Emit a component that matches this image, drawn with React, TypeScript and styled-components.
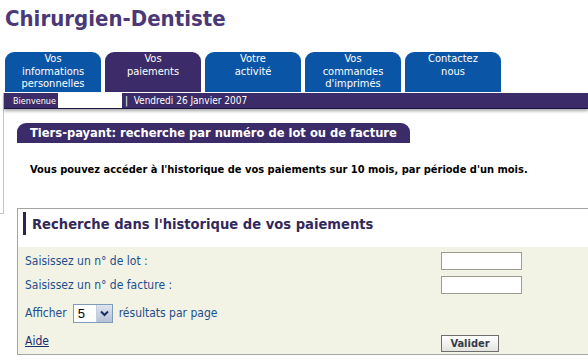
import React from "react";
import styled, { createGlobalStyle } from "styled-components";

const PURPLE = "#3b2b68";
const BLUE = "#0b55a7";

const tabs = [
  { label: "Vos informations personnelles", lines: ["Vos", "informations", "personnelles"] },
  { label: "Vos paiements", lines: ["Vos", "paiements"], active: true },
  { label: "Votre activité", lines: ["Votre", "activité"] },
  { label: "Vos commandes d'imprimés", lines: ["Vos", "commandes", "d'imprimés"] },
  { label: "Contactez nous", lines: ["Contactez", "nous"] },
];

const App: React.FC = () => {
  return (
    <Page>
      <GlobalStyle />
      <Title>Chirurgien-Dentiste</Title>
      <TabBar>
        {tabs.map((t) => (
          <Tab key={t.label} $active={!!t.active}>
            {t.lines.map((l) => (
              <span key={l}>{l}</span>
            ))}
          </Tab>
        ))}
      </TabBar>
      <Body>
        <Rail />
        <Main>
          <InfoBar>
            <Welcome>Bienvenue</Welcome>
            <UserSlot />
            <DateText>|&nbsp; Vendredi 26 Janvier 2007</DateText>
          </InfoBar>
          <SectionHeader>Tiers-payant: recherche par numéro de lot ou de facture</SectionHeader>
          <Intro>Vous pouvez accéder à l'historique de vos paiements sur 10 mois, par période d'un mois.</Intro>
          <SearchBox>
            <BoxTitle>Recherche dans l'historique de vos paiements</BoxTitle>
            <Form>
              <Label>Saisissez un n° de lot :</Label>
              <TextInput type="text" />
              <Label>Saisissez un n° de facture :</Label>
              <TextInput type="text" />
              <Label $wide>
                Afficher
                <Select>
                  <SelectValue>5</SelectValue>
                  <SelectButton>
                    <svg width="9" height="7" viewBox="0 0 9 7">
                      <path d="M1 1.5 L4.5 5 L8 1.5" fill="none" stroke="#1c2f5c" strokeWidth="2" />
                    </svg>
                  </SelectButton>
                </Select>
                résultats par page
              </Label>
              <HelpLink href="#">Aide</HelpLink>
              <Button>Valider</Button>
            </Form>
          </SearchBox>
        </Main>
      </Body>
    </Page>
  );
};
export default App;

const GlobalStyle = createGlobalStyle`
  html, body {
    margin: 0;
    padding: 0;
    background: #fff;
    font-family: "DejaVu Sans Condensed", "DejaVu Sans", Tahoma, sans-serif;
  }
`;

const Page = styled.div`
  width: 588px;
  height: 361px;
  overflow: hidden;
`;

const Title = styled.h1`
  margin: 0;
  padding: 6px 0 0 5px;
  height: 52px;
  box-sizing: border-box;
  font-size: 22px;
  font-weight: bold;
  color: #4a3877;
  line-height: 26px;
`;

const TabBar = styled.div`
  display: flex;
  gap: 4px;
  padding-left: 5px;
  height: 41px;
`;

const Tab = styled.div<{ $active: boolean }>`
  width: 96px;
  height: 40px;
  box-sizing: border-box;
  padding-top: 1px;
  border-radius: 9px 9px 0 0;
  background: ${(p) => (p.$active ? PURPLE : BLUE)};
  color: #fff;
  font-size: 11px;
  line-height: 12.7px;
  text-align: center;
  display: flex;
  flex-direction: column;
  align-items: center;
`;

const Body = styled.div`
  display: flex;
`;

const Rail = styled.div`
  width: 3px;
  height: 120px;
  border-right: 1px solid #c4c4c4;
  border-bottom: 1px solid #c4c4c4;
`;

const Main = styled.div`
  flex: 1;
  display: flex;
  flex-direction: column;
`;

const InfoBar = styled.div`
  height: 15px;
  background: ${PURPLE};
  box-shadow: 0 2px 3px rgba(0, 0, 0, 0.35);
  display: flex;
  align-items: center;
  font-size: 9px;
  color: #fff;
  border-bottom: 1px solid #1e1540;
`;

const Welcome = styled.span`
  padding-left: 9px;
  width: 45px;
`;

const UserSlot = styled.span`
  width: 64px;
  height: 100%;
  background: #fff;
`;

const DateText = styled.span`
  padding-left: 3px;
  font-size: 10px;
`;

const SectionHeader = styled.div`
  margin: 14px 0 0 13px;
  width: 393px;
  height: 20px;
  box-sizing: border-box;
  padding-left: 13px;
  background: ${PURPLE};
  border-radius: 9px 9px 0 0;
  color: #fff;
  font-size: 12.8px;
  font-weight: bold;
  line-height: 20px;
`;

const Intro = styled.p`
  margin: 20px 0 0 26px;
  font-size: 11px;
  font-weight: bold;
  color: #000;
  line-height: 14px;
`;

const SearchBox = styled.div`
  margin: 31px 0 0 13px;
  border: 1px solid #a4a4a4;
  border-right: none;
  height: 147px;
  box-sizing: border-box;
`;

const BoxTitle = styled.h2`
  margin: 3px 0 0 5px;
  padding-left: 6px;
  border-left: 3px solid #2e2450;
  height: 23px;
  font-size: 14.6px;
  font-weight: bold;
  color: #33285a;
  line-height: 23px;
`;

const Form = styled.div`
  margin-top: 12px;
  background: #f2f2e5;
  padding: 5px 66px 0 7px;
  height: 107px;
  box-sizing: border-box;
  display: grid;
  grid-template-columns: 1fr 81px;
  grid-template-rows: 18px 18px 26px 18px;
  row-gap: 6px;
  align-items: center;
`;

const Label = styled.span<{ $wide?: boolean }>`
  display: flex;
  align-items: center;
  gap: ${(p) => (p.$wide ? 6 : 4)}px;
  font-size: 12px;
  color: #1d4f8c;
  grid-column: ${(p) => (p.$wide ? "1 / 3" : "auto")};
`;

const TextInput = styled.input`
  width: 81px;
  height: 18px;
  box-sizing: border-box;
  border: 1px solid #9c9c94;
  background: #fff;
  margin: 0;
  padding: 0;
`;

const Select = styled.span`
  display: flex;
  width: 40px;
  height: 19px;
  box-sizing: border-box;
  border: 1px solid #7f9db9;
  background: #fff;
`;

const SelectValue = styled.span`
  flex: 1;
  padding-left: 4px;
  font-family: "Liberation Sans", Arial, sans-serif;
  font-size: 13px;
  line-height: 17px;
  color: #000;
`;

const SelectButton = styled.span`
  width: 15px;
  display: flex;
  align-items: center;
  justify-content: center;
  background: linear-gradient(#dfe4ef, #b6c1d6);
  border-left: 1px solid #c3cde0;
`;

const HelpLink = styled.a`
  justify-self: start;
  font-size: 12px;
  color: #1a2f6e;
  text-decoration: underline;
`;

const Button = styled.button`
  justify-self: start;
  width: 58px;
  height: 17px;
  padding: 0;
  border: 1px solid #6e6e6e;
  background: linear-gradient(#ffffff, #e4e4de);
  font-family: "DejaVu Sans Condensed", "DejaVu Sans", Tahoma, sans-serif;
  font-size: 11px;
  font-weight: bold;
  color: #333a4a;
  margin-top: 4px;
`;
